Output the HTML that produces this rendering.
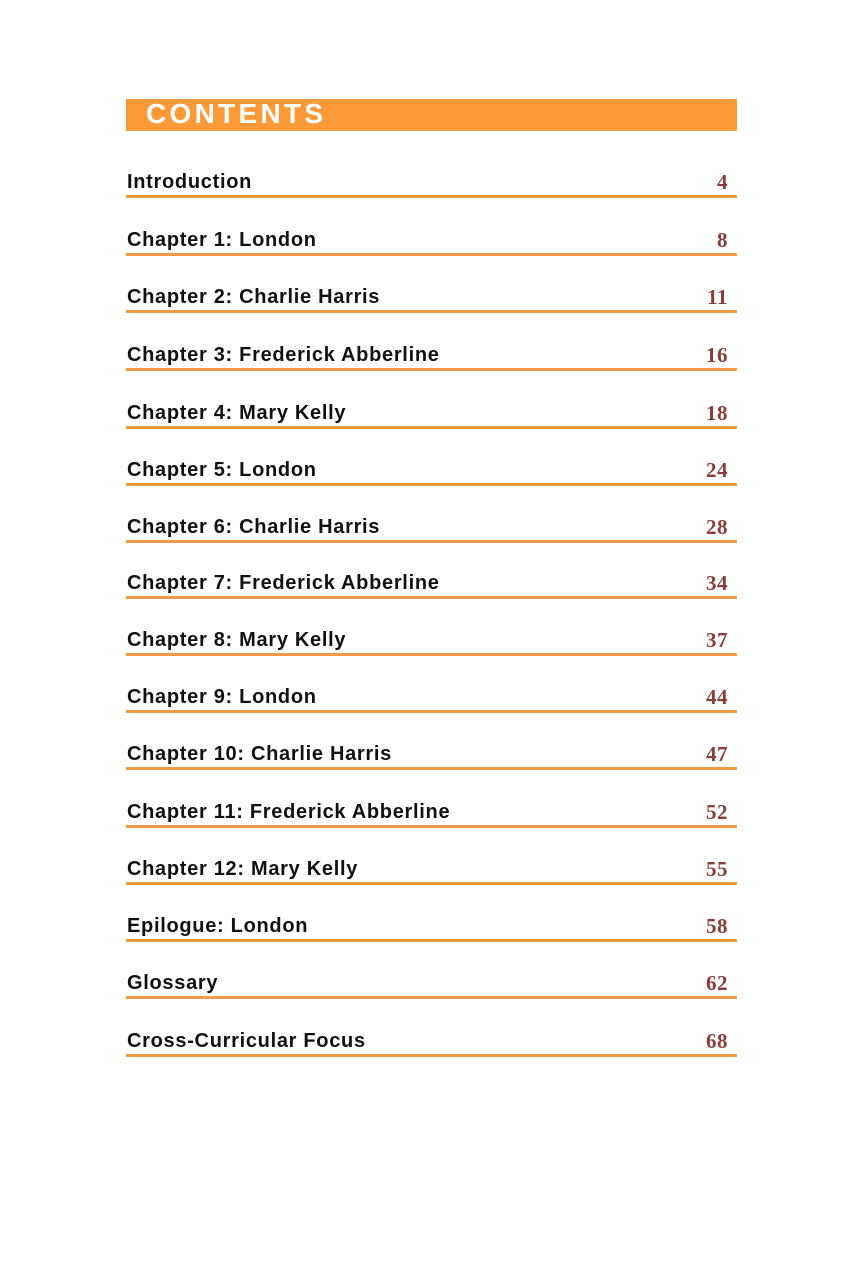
<!DOCTYPE html>
<html><head><meta charset="utf-8"><style>
body{margin:0;width:850px;height:1276px;background:#fff;position:relative;overflow:hidden}
.bar{position:absolute;left:126px;top:99px;width:611px;height:32px;background:#fb9a37}
.bar span{position:absolute;left:20px;top:-1px;font:bold 28px "Liberation Sans",sans-serif;color:#fff;letter-spacing:3.3px}
.r{position:absolute;left:126px;width:611px;height:26px;border-bottom:3px solid #f59a44}
.t{position:absolute;left:1px;top:2px;font:bold 20px "Liberation Sans",sans-serif;color:#111;letter-spacing:0.7px}
.n{position:absolute;right:9px;top:1px;font:900 21px "Liberation Serif",serif;color:#8a3d35;letter-spacing:0.5px}
</style></head><body>
<div class="bar"><span>CONTENTS</span></div>
<div class="r" style="top:169px"><div class="t">Introduction</div><div class="n">4</div></div>
<div class="r" style="top:227px"><div class="t">Chapter 1: London</div><div class="n">8</div></div>
<div class="r" style="top:284px"><div class="t">Chapter 2: Charlie Harris</div><div class="n">11</div></div>
<div class="r" style="top:342px"><div class="t">Chapter 3: Frederick Abberline</div><div class="n">16</div></div>
<div class="r" style="top:400px"><div class="t">Chapter 4: Mary Kelly</div><div class="n">18</div></div>
<div class="r" style="top:457px"><div class="t">Chapter 5: London</div><div class="n">24</div></div>
<div class="r" style="top:514px"><div class="t">Chapter 6: Charlie Harris</div><div class="n">28</div></div>
<div class="r" style="top:570px"><div class="t">Chapter 7: Frederick Abberline</div><div class="n">34</div></div>
<div class="r" style="top:627px"><div class="t">Chapter 8: Mary Kelly</div><div class="n">37</div></div>
<div class="r" style="top:684px"><div class="t">Chapter 9: London</div><div class="n">44</div></div>
<div class="r" style="top:741px"><div class="t">Chapter 10: Charlie Harris</div><div class="n">47</div></div>
<div class="r" style="top:799px"><div class="t">Chapter 11: Frederick Abberline</div><div class="n">52</div></div>
<div class="r" style="top:856px"><div class="t">Chapter 12: Mary Kelly</div><div class="n">55</div></div>
<div class="r" style="top:913px"><div class="t">Epilogue: London</div><div class="n">58</div></div>
<div class="r" style="top:970px"><div class="t">Glossary</div><div class="n">62</div></div>
<div class="r" style="top:1028px"><div class="t">Cross-Curricular Focus</div><div class="n">68</div></div>
</body></html>
